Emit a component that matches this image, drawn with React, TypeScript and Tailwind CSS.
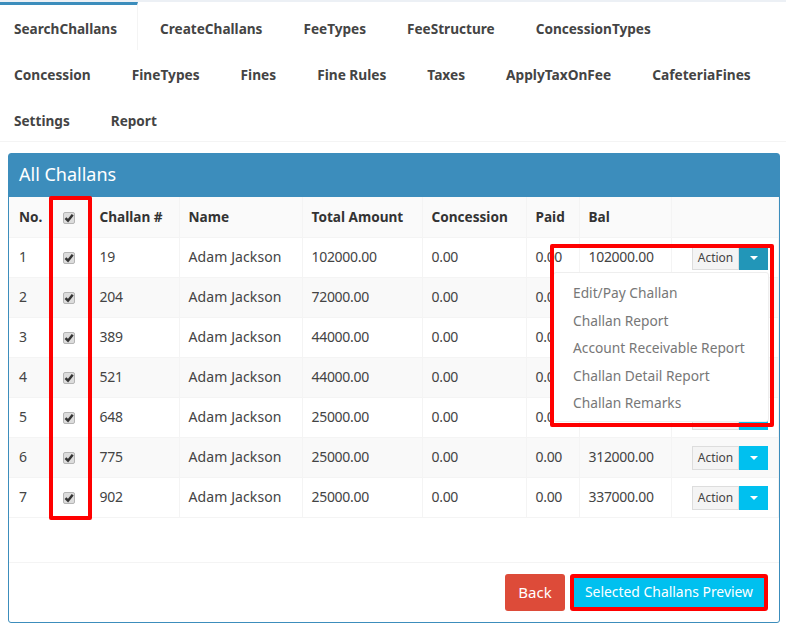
import React from "react";

const tabs = [
  ["SearchChallans", "CreateChallans", "FeeTypes", "FeeStructure", "ConcessionTypes"],
  ["Concession", "FineTypes", "Fines", "Fine Rules", "Taxes", "ApplyTaxOnFee", "CafeteriaFines"],
  ["Settings", "Report"],
];
const rows = [
  [1, 19, "102000.00", "0.00", "102000.00"],
  [2, 204, "72000.00", "0.00", "174000.00"],
  [3, 389, "44000.00", "0.00", "218000.00"],
  [4, 521, "44000.00", "0.00", "262000.00"],
  [5, 648, "25000.00", "0.00", "287000.00"],
  [6, 775, "25000.00", "0.00", "312000.00"],
  [7, 902, "25000.00", "0.00", "337000.00"],
];
const menu = ["Edit/Pay Challan", "Challan Report", "Account Receivable Report", "Challan Detail Report", "Challan Remarks"];

function Check() {
  return (
    <span className="inline-flex w-[12px] h-[12px] rounded-[2px] border border-[#b5b5b5] bg-[#dcdcdc] items-center justify-center align-middle">
      <svg viewBox="0 0 12 12" className="w-[12px] h-[12px] shrink-0">
        <path d="M2.5 6.2 L5 8.7 L9.7 2.8" fill="none" stroke="#333" strokeWidth="2.5" />
      </svg>
    </span>
  );
}

function ActionBtn({ open }: { open?: boolean }) {
  return (
    <div className="inline-flex h-[24px] align-middle">
      <span className="w-[47px] bg-[#f4f4f4] border border-[#ddd] text-[#444] text-[12px] flex items-center justify-center">Action</span>
      <span className={`w-[29px] flex items-center justify-center ${open ? "bg-[#2296b8]" : "bg-[#00c0ef]"}`}>
        <span className="w-0 h-0 border-x-[4px] border-x-transparent border-t-[4px] border-t-white" />
      </span>
    </div>
  );
}

const th = "border-r border-[#f4f4f4] text-left font-bold text-[13.6px] text-[#333] pl-[9px] pr-0 bg-[#fafafa] h-[40px] border-b border-b-[#f4f4f4]";
const td = "border-r border-[#f4f4f4] pl-[9px] pr-0 pb-[2px] h-[40px] border-b border-b-[#f4f4f4]";
const num = "tracking-[-0.3px]";

export default function App() {
  return (
    <div className="w-[786px] h-[626px] overflow-hidden bg-white text-[14px] text-[#444]" style={{ fontFamily: '"Noto Sans", "Open Sans", sans-serif' }}>
      <div className="h-[2px] bg-[#ecf0f5]" />
      <div className="border-b border-[#f4f4f4] h-[140px]">
        {tabs.map((row, i) => (
          <div key={i} className="flex h-[46px]">
            {row.map((t, j) =>
              i === 0 && j === 0 ? (
                <div key={t} className="shrink-0 h-[48px] pl-[14px] pr-[20px] mr-[8px] pt-[3px] flex items-center border-r border-[#f4f4f4] border-t-[3px] border-t-[#3c8dbc] font-bold text-[13.6px] text-[#444] whitespace-nowrap">
                  {t}
                </div>
              ) : (
                <div key={t} className={`shrink-0 px-[14px] mr-[13px] pt-[8px] flex items-center font-bold text-[#444] whitespace-nowrap ${i === 1 ? "text-[13.7px]" : "text-[13.6px]"}`}>
                  {t}
                </div>
              )
            )}
          </div>
        ))}
      </div>
      <div className="relative ml-[8px] mt-[11px] w-[772px] h-[470px] border border-[#3c8dbc] rounded-[3px]">
        <div className="h-[43px] bg-[#3c8dbc] text-white text-[18px] flex items-center pl-[10px] pb-[2px]">All Challans</div>
        <table className="w-full table-fixed border-collapse">
          <colgroup>
            <col className="w-[40px]" />
            <col className="w-[40px]" />
            <col className="w-[90px]" />
            <col className="w-[123px]" />
            <col className="w-[120px]" />
            <col className="w-[104px]" />
            <col className="w-[53px]" />
            <col className="w-[92px]" />
            <col />
          </colgroup>
          <thead>
            <tr>
              <th className={`${th} !pl-[10px]`}>No.</th>
              <th className={`${th} !text-center !pl-0`}><Check /></th>
              <th className={`${th} !pl-[10px]`}>Challan #</th>
              <th className={th}>Name</th>
              <th className={th}>Total Amount</th>
              <th className={th}>Concession</th>
              <th className={th}>Paid</th>
              <th className={th}>Bal</th>
              <th className={th}></th>
            </tr>
          </thead>
          <tbody>
            {rows.map((r, i) => (
              <tr key={i} className={i % 2 === 1 ? "bg-[#f9f9f9]" : ""}>
                <td className={`${td} !pl-[10px]`}>{r[0]}</td>
                <td className={`${td} !text-center !pl-0`}><Check /></td>
                <td className={`${td} ${num} !pl-[10px]`}>{r[1]}</td>
                <td className={`${td} tracking-[0.1px]`}>Adam Jackson</td>
                <td className={`${td} ${num}`}>{r[2]}</td>
                <td className={`${td} ${num}`}>0.00</td>
                <td className={`${td} ${num}`}>{r[3]}</td>
                <td className={`${td} ${num}`}>{r[4]}</td>
                <td className={`${td} !pb-0 pt-[1px] !pl-0 pr-[10px] text-right`}><ActionBtn open={i === 0} /></td>
              </tr>
            ))}
          </tbody>
        </table>
        <div className="mt-[44px] border-t border-[#f4f4f4] h-[60px] flex justify-end items-start pt-[11px] pr-[11px] gap-[5px]">
          <button className="w-[60px] h-[37px] rounded-[3px] bg-[#dd4b39] text-white text-[15px]">Back</button>
          <button className="w-[198px] h-[37px] bg-[#00c0ef] text-white text-[13.9px] border-[4px] border-[#f00] rounded-[3px]">Selected Challans Preview</button>
        </div>
        {/* dropdown */}
        <div className="absolute left-[544px] top-[118px] w-[216px] h-[150px] bg-white border border-[#eee] rounded-[3px] pt-[7px] pl-[19px] text-[#777] text-[13.75px]">
          {menu.map((m) => (
            <div key={m} className="h-[27.5px] flex items-center whitespace-nowrap">{m}</div>
          ))}
        </div>
        {/* red highlights */}
        <div className="absolute left-[40px] top-[42px] w-[43px] h-[324px] border-[4px] border-[#f00] rounded-[2px]" />
        <div className="absolute left-[541px] top-[90px] w-[224px] h-[183px] border-[4px] border-[#f00] rounded-[2px]" />
      </div>
    </div>
  );
}
